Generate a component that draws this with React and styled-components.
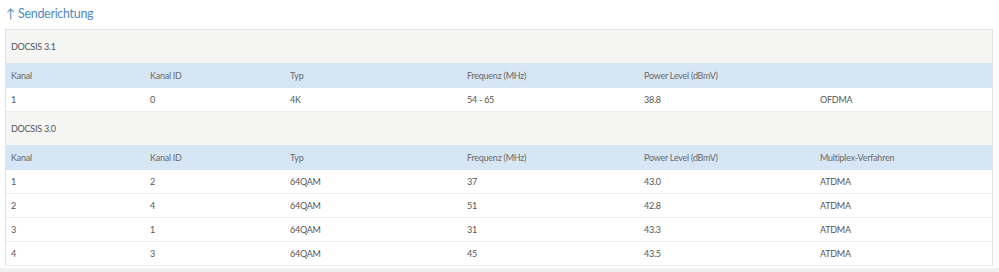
import React from 'react';
import styled, { createGlobalStyle } from 'styled-components';

const GlobalStyle = createGlobalStyle`
    *, *::before, *::after {
        box-sizing: border-box;
    }
    body {
        margin: 0;
        background: #fff;
        font-family: Lato, "Open Sans", sans-serif;
        color: #555;
    }
`;

const Page = styled.div`
    padding: 0 6px 0 5px;
    border-bottom: 5px solid #f0f0f0;
`;

const Title = styled.h3`
    margin: 0;
    height: 29px;
    padding: 0 0 3px 1px;
    display: flex;
    align-items: center;
    font-size: 12.5px;
    font-weight: 400;
    letter-spacing: -0.3px;
    color: #5089c3;
`;

const Box = styled.div`
    border: 1px solid #e4e4e4;
    border-bottom: none;
    margin-bottom: 2px;
`;

const Section = styled.div`
    height: 33px;
    display: flex;
    align-items: center;
    padding-left: 5px;
    background: #f5f5f3;
    font-size: 9px;
    letter-spacing: -0.25px;
    color: #555;
`;

const Row = styled.div`
    display: grid;
    grid-template-columns: 139px 140px 177px 177px 176px 1fr;
    height: ${(p) => (p.$head ? 25 : 24)}px;
    align-items: center;
    background: ${(p) => (p.$head ? '#d7e6f4' : '#fff')};
    border-bottom: 1px solid ${(p) => (p.$head ? '#d7e6f4' : '#ececec')};
    font-size: 9px;
    letter-spacing: -0.25px;
    color: ${(p) => (p.$head ? '#6a6a6a' : '#555')};
`;

const Cell = styled.div`
    padding-left: 5px;
    white-space: nowrap;
`;

const header = ['Kanal', 'Kanal ID', 'Typ', 'Frequenz (MHz)', 'Power Level (dBmV)'];

const sections = [
    {
        name: 'DOCSIS 3.1',
        head: [...header, ''],
        rows: [['1', '0', '4K', '54 - 65', '38.8', 'OFDMA']],
    },
    {
        name: 'DOCSIS 3.0',
        head: [...header, 'Multiplex-Verfahren'],
        rows: [
            ['1', '2', '64QAM', '37', '43.0', 'ATDMA'],
            ['2', '4', '64QAM', '51', '42.8', 'ATDMA'],
            ['3', '1', '64QAM', '31', '43.3', 'ATDMA'],
            ['4', '3', '64QAM', '45', '43.5', 'ATDMA'],
        ],
    },
];

export default function App() {
    return (
        <Page>
            <GlobalStyle />
            <Title>↑ Senderichtung</Title>
            <Box>
                {sections.map((s) => (
                    <React.Fragment key={s.name}>
                        <Section>{s.name}</Section>
                        <Row $head>
                            {s.head.map((h, i) => (
                                <Cell key={i}>{h}</Cell>
                            ))}
                        </Row>
                        {s.rows.map((r, i) => (
                            <Row key={i}>
                                {r.map((c, j) => (
                                    <Cell key={j}>{c}</Cell>
                                ))}
                            </Row>
                        ))}
                    </React.Fragment>
                ))}
            </Box>
        </Page>
    );
}
